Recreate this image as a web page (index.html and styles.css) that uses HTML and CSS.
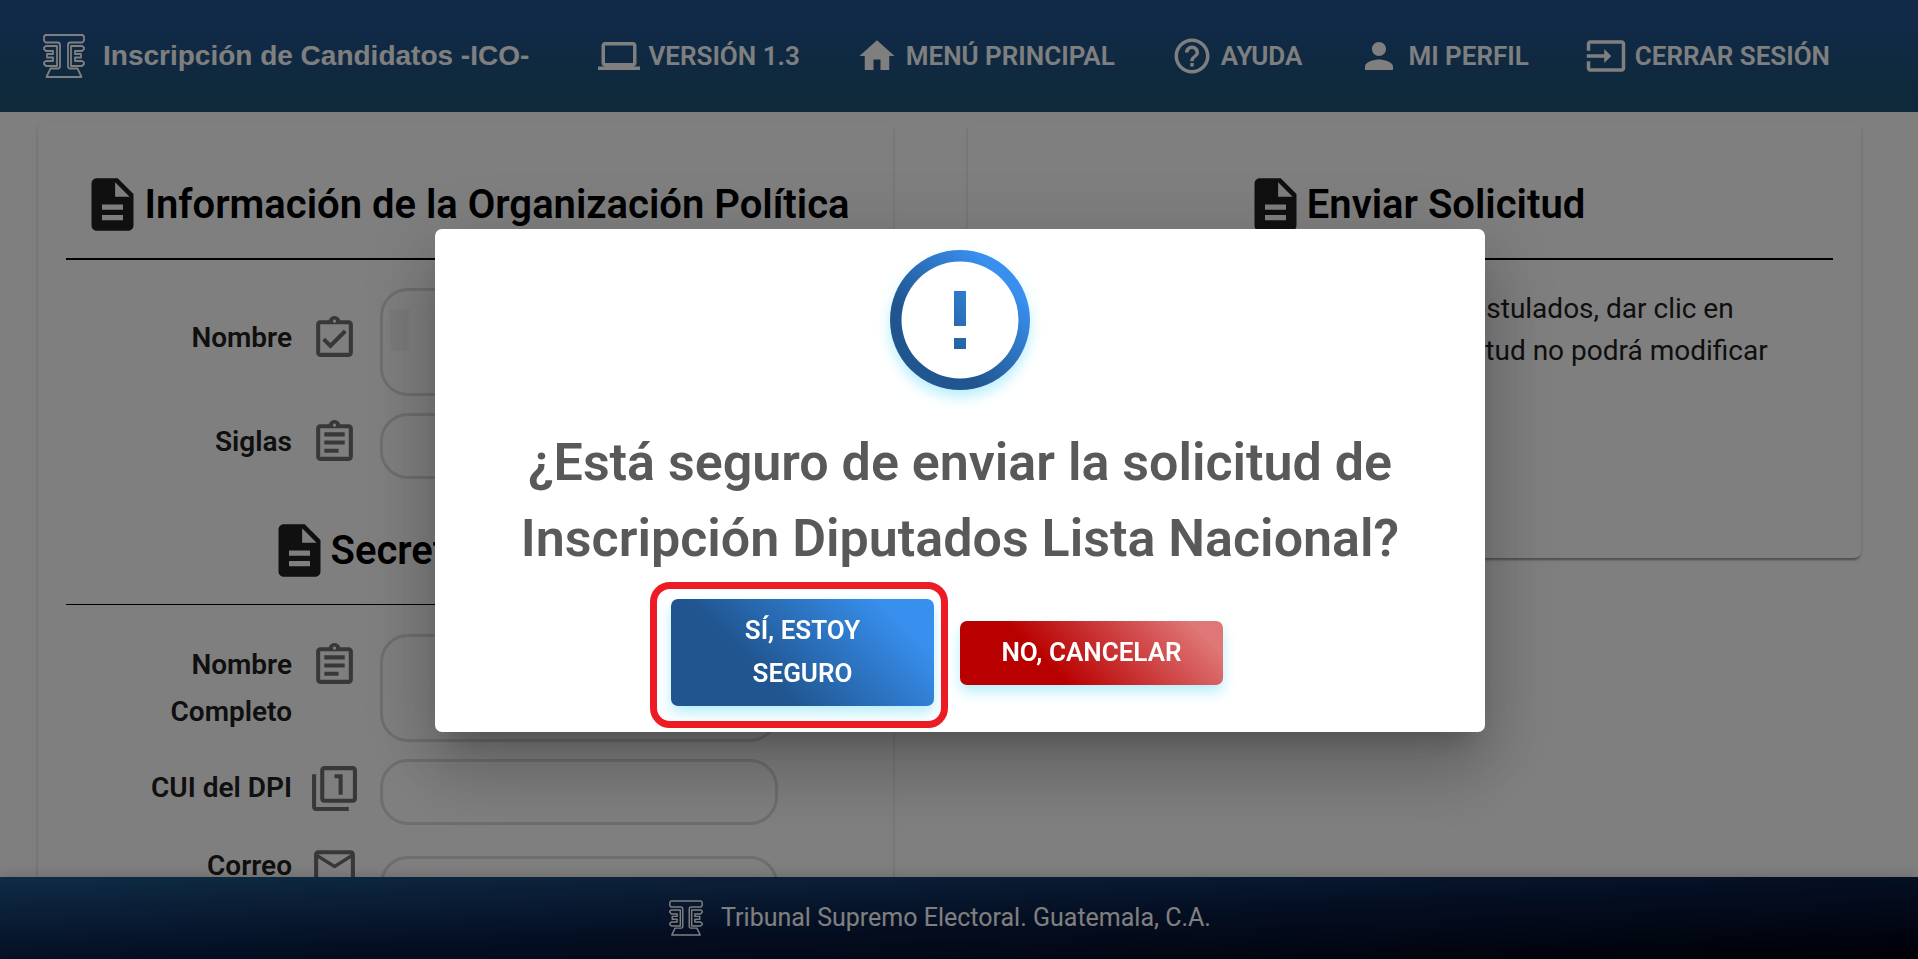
FILE: index.html
```html
<!DOCTYPE html>
<html lang="es">
<head>
<meta charset="utf-8">
<meta name="viewport" content="width=device-width, initial-scale=1">
<title>Inscripción de Candidatos -ICO-</title>
<link rel="stylesheet" href="styles.css">
</head>
<body>
<svg class="sprite" aria-hidden="true">
  <symbol id="logo" viewBox="0 0 42 44">
    <g fill="none" stroke="currentColor" stroke-width="1.800" stroke-linejoin="round">
      <path d="M2.500 1H39.500L41 2.500V6.500L39.500 8.500H27.500Q25 8.500 25 11V32Q25 34.500 27 34.500H34.500L38.500 43H3.500L7.500 34.500H15Q17 34.500 17 32V11Q17 8.500 14.500 8.500H2.500L1 6.500V2.500Z"/>
      <path d="M14 12H3L1 13.500V15L3 17H10V20H4V23.500H10V27H3L1 28.500V30L3 32H14Z"/>
      <path d="M28 12H39L41 13.500V15L39 17H32V20H38V23.500H32V27H39L41 28.500V30L39 32H28Z"/>
    </g>
  </symbol>
  <symbol id="laptop" viewBox="0 0 24 24"><path d="M20 18c1.100 0 2-.9 2-2V6c0-1.100-.9-2-2-2H4c-1.100 0-2 .9-2 2v10c0 1.100.9 2 2 2H0v2h24v-2h-4zM4 6h16v10H4V6z"/></symbol>
  <symbol id="home" viewBox="0 0 24 24"><path d="M10 20v-6h4v6h5v-8h3L12 3 2 12h3v8z"/></symbol>
  <symbol id="help" viewBox="0 0 24 24"><path d="M11 18h2v-2h-2v2zm1-16C6.480 2 2 6.480 2 12s4.480 10 10 10 10-4.480 10-10S17.520 2 12 2zm0 18c-4.410 0-8-3.590-8-8s3.590-8 8-8 8 3.590 8 8-3.590 8-8 8zm0-14c-2.210 0-4 1.790-4 4h2c0-1.100.9-2 2-2s2 .9 2 2c0 2-3 1.750-3 5h2c0-2.250 3-2.500 3-5 0-2.210-1.790-4-4-4z"/></symbol>
  <symbol id="person" viewBox="0 0 24 24"><path d="M12 12c2.210 0 4-1.790 4-4s-1.790-4-4-4-4 1.790-4 4 1.790 4 4 4zm0 2c-2.670 0-8 1.340-8 4v2h16v-2c0-2.660-5.330-4-8-4z"/></symbol>
  <symbol id="exit" viewBox="0 0 24 24"><path d="M21 3.010H3c-1.100 0-2 .9-2 2V9h2V4.990h18v14.030H3V15H1v4.010c0 1.100.9 1.980 2 1.980h18c1.100 0 2-.88 2-1.980v-14c0-1.110-.9-2-2-2zM11 16l4-4-4-4v3H1v2h10v3z"/></symbol>
  <symbol id="document" viewBox="0 0 24 24"><path d="M14 2H6c-1.100 0-1.990.9-1.990 2L4 20c0 1.100.89 2 1.990 2H18c1.100 0 2-.9 2-2V8l-6-6zm2 16H8v-2h8v2zm0-4H8v-2h8v2zm-3-5V3.500L18.500 9H13z"/></symbol>
  <symbol id="clip-check" viewBox="0 0 24 24"><path d="M19 3h-4.180C14.400 1.840 13.300 1 12 1s-2.400.84-2.820 2H5c-1.100 0-2 .9-2 2v14c0 1.100.9 2 2 2h14c1.100 0 2-.9 2-2V5c0-1.100-.9-2-2-2zm-7-.25c.41 0 .75.34.75.75s-.34.75-.75.75-.75-.34-.75-.75.34-.75.75-.75zM19 19H5V5h14v14zM17.990 9l-1.410-1.420-6.590 6.590-2.580-2.570-1.420 1.410 4 3.990z"/></symbol>
  <symbol id="clip-text" viewBox="0 0 24 24"><path d="M7 15h7v2H7zm0-4h10v2H7zm0-4h10v2H7zm12-4h-4.180C14.400 1.840 13.300 1 12 1s-2.400.84-2.820 2H5c-1.100 0-2 .9-2 2v14c0 1.100.9 2 2 2h14c1.100 0 2-.9 2-2V5c0-1.100-.9-2-2-2zm-7-.25c.41 0 .75.34.75.75s-.34.75-.75.75-.75-.34-.75-.75.34-.75.75-.75zM19 19H5V5h14v14z"/></symbol>
  <symbol id="filter-one" viewBox="0 0 24 24"><path d="M3 5H1v16c0 1.100.9 2 2 2h16v-2H3V5zm11 10h2V5h-4v2h2v8zm7-14H7c-1.100 0-2 .9-2 2v14c0 1.100.9 2 2 2h14c1.100 0 2-.9 2-2V3c0-1.100-.9-2-2-2zm0 16H7V3h14v14z"/></symbol>
  <symbol id="mail" viewBox="0 0 24 24"><path d="M22 6c0-1.100-.9-2-2-2H4c-1.100 0-2 .9-2 2v12c0 1.100.9 2 2 2h16c1.100 0 2-.9 2-2V6zm-2 0l-8 5-8-5h16zm0 12H4V8l8 5 8-5v10z"/></symbol>
</svg>

<header class="topbar">
  <div class="brand">
    <svg class="brand-logo"><use href="#logo"/></svg>
    <span>Inscripción de Candidatos -ICO-</span>
  </div>
  <nav class="menu">
    <a href="#"><svg class="icon"><use href="#laptop"/></svg>VERSIÓN 1.3</a>
    <a href="#"><svg class="icon"><use href="#home"/></svg>MENÚ PRINCIPAL</a>
    <a href="#"><svg class="icon"><use href="#help"/></svg>AYUDA</a>
    <a href="#"><svg class="icon"><use href="#person"/></svg>MI PERFIL</a>
    <a href="#"><svg class="icon"><use href="#exit"/></svg>CERRAR SESIÓN</a>
  </nav>
</header>

<main class="content">
  <section class="card card-info">
    <h2 class="heading"><svg class="icon-large"><use href="#document"/></svg>Información de la Organización Política</h2>
    <div class="row">
      <div class="caption"><label for="nombre">Nombre</label><svg class="icon-field"><use href="#clip-check"/></svg></div>
      <textarea class="field field-tall field-marked" id="nombre" readonly></textarea>
    </div>
    <div class="row">
      <div class="caption"><label for="siglas">Siglas</label><svg class="icon-field"><use href="#clip-text"/></svg></div>
      <input class="field" id="siglas" type="text" readonly>
    </div>
    <h2 class="heading heading-thin"><svg class="icon-large"><use href="#document"/></svg>Secretario General</h2>
    <div class="row">
      <div class="caption"><label for="completo">Nombre Completo</label><svg class="icon-field"><use href="#clip-text"/></svg></div>
      <textarea class="field field-tall" id="completo" readonly></textarea>
    </div>
    <div class="row">
      <div class="caption"><label for="cui">CUI del DPI</label><svg class="icon-field"><use href="#filter-one"/></svg></div>
      <input class="field" id="cui" type="text" readonly>
    </div>
    <div class="row">
      <div class="caption"><label for="correo">Correo Electrónico</label><svg class="icon-field"><use href="#mail"/></svg></div>
      <input class="field" id="correo" type="email" readonly>
    </div>
  </section>

  <section class="card card-send">
    <h2 class="heading"><svg class="icon-large"><use href="#document"/></svg>Enviar Solicitud</h2>
    <p class="note">Con todos los candidatos ya postulados, dar clic en<br>Enviar. Una vez enviada esta solicitud no podrá modificar<br>los datos.</p>
  </section>
</main>

<footer class="footer">
  <svg class="footer-logo"><use href="#logo"/></svg>
  <span>Tribunal Supremo Electoral. Guatemala, C.A.</span>
</footer>

<div class="backdrop">
  <div class="dialog" role="dialog" aria-modal="true" aria-labelledby="question">
    <div class="badge">
      <svg viewBox="0 0 140 140">
        <circle cx="70" cy="70" r="58.500" fill="#fff"/>
        <path fill="url(#mark)" d="M64 41h12v35H64zM64 88h12v11H64z"/>
        <defs><linearGradient id="mark" gradientUnits="userSpaceOnUse" x1="30" y1="110" x2="110" y2="30"><stop offset="0.100" stop-color="#20558f"/><stop offset="1" stop-color="#388fee"/></linearGradient></defs>
      </svg>
    </div>
    <h1 class="question" id="question">¿Está seguro de enviar la solicitud de Inscripción Diputados Lista Nacional?</h1>
    <div class="actions">
      <div class="highlight"><button class="button button-yes" type="button">SÍ, ESTOY SEGURO</button></div>
      <button class="button button-no" type="button">NO, CANCELAR</button>
    </div>
  </div>
</div>
</body>
</html>
```
FILE: styles.css
```css
* {
  box-sizing: border-box;
}

body {
  margin: 0;
  height: 100vh;
  display: flex;
  flex-direction: column;
  overflow: hidden;
  background: #fff;
  color: #202020;
  font-family: Roboto, "Liberation Sans", sans-serif;
}

svg {
  display: block;
  flex: none;
  fill: currentColor;
}

.sprite {
  position: absolute;
  width: 0;
  height: 0;
}

.topbar {
  flex: none;
  height: 112px;
  padding: 0 88px 0 43px;
  display: flex;
  align-items: center;
  justify-content: space-between;
  background: linear-gradient(#20548e 30%, #1f5274 90%);
  color: #fff;
}

.brand {
  display: flex;
  align-items: center;
  gap: 18px;
  font: bold 28px/40px "Liberation Sans", Arial, sans-serif;
}

.brand-logo {
  width: 42px;
  height: 44px;
}

.menu {
  display: flex;
  gap: 56px;
}

.menu a {
  display: flex;
  align-items: center;
  gap: 8px;
  color: inherit;
  font-size: 26px;
  font-weight: 600;
  line-height: 42px;
  text-decoration: none;
  white-space: nowrap;
}

.icon {
  width: 42px;
  height: 42px;
}

.content {
  flex: 1;
  min-height: 0;
  overflow: hidden;
  padding: 10px 57px 0 38px;
  display: flex;
  align-items: flex-start;
  gap: 75px;
}

.card {
  padding: 28px;
  border-radius: 7px;
  background: #fff;
  box-shadow: 0 4px 2px -2px rgba(0, 0, 0, 0.2), 0 2px 2px rgba(0, 0, 0, 0.14), 0 2px 5px rgba(0, 0, 0, 0.12);
}

.card-info {
  flex: 799;
}

.card-send {
  flex: 837;
  min-height: 436px;
}

.heading {
  margin: 0 0 28px;
  padding: 23px 0 22px;
  display: flex;
  align-items: center;
  justify-content: center;
  border-bottom: 2px solid #000;
  color: #000;
  font-size: 40px;
  font-weight: 600;
  line-height: 63px;
  white-space: nowrap;
}

.heading-thin {
  margin-bottom: 29px;
  border-bottom-width: 1px;
}

.icon-large {
  width: 63px;
  height: 63px;
  color: #202020;
}

.row {
  display: grid;
  grid-template-columns: 293fr 398fr;
  align-items: center;
  column-gap: 21px;
  margin-bottom: 17px;
  padding-right: 87px;
}

.caption {
  display: flex;
  align-items: flex-start;
  justify-content: flex-end;
  gap: 18px;
  padding-left: 66px;
}

.caption label {
  font-size: 28px;
  font-weight: 600;
  line-height: 47px;
  text-align: right;
}

.icon-field {
  width: 49px;
  height: 49px;
  margin-bottom: 8px;
  color: #707070;
}

.field {
  display: block;
  width: 100%;
  height: 66px;
  padding: 8px 24px;
  border: 3px solid #dcdcdc;
  border-radius: 28px;
  outline: none;
  resize: none;
  background: none;
  color: inherit;
  font: 28px/42px Roboto, sans-serif;
}

.field-tall {
  height: 108px;
}

.field-marked {
  background: linear-gradient(#f4f4f4, #f4f4f4) 7px 18px / 19px 42px no-repeat;
}

.note {
  margin: 0;
  font-size: 28px;
  line-height: 42px;
  text-align: center;
  white-space: nowrap;
}

.footer {
  flex: none;
  height: 82px;
  padding-right: 38px;
  display: flex;
  align-items: center;
  justify-content: center;
  gap: 18px;
  background: linear-gradient(to bottom right, #1e588c, #0a1f48 50%, #00000c);
  box-shadow: 0 0 14px rgba(0, 0, 0, 0.2);
  color: #fff;
  font-size: 25px;
  line-height: 42px;
  z-index: 1;
}

.footer-logo {
  width: 34px;
  height: 36px;
}

.backdrop {
  position: fixed;
  inset: 0;
  z-index: 2;
  display: flex;
  align-items: center;
  justify-content: center;
  padding: 2px 0 0 2px;
  background: rgba(0, 0, 0, 0.5);
}

.dialog {
  width: 1050px;
  max-width: 96%;
  padding: 21px 42px 26px;
  display: flex;
  flex-direction: column;
  align-items: center;
  border-radius: 7px;
  background: #fff;
  box-shadow: 0 19px 26px -12px rgba(0, 0, 0, 0.2), 0 42px 66px 5px rgba(0, 0, 0, 0.14), 0 16px 80px 14px rgba(0, 0, 0, 0.12);
}

.badge {
  width: 140px;
  height: 140px;
  border-radius: 50%;
  background: linear-gradient(45deg, #20558f 33%, #388fee 80%);
  box-shadow: 0 7px 14px #b8eefb;
}

.question {
  max-width: 940px;
  margin: 35px 0 22px;
  color: #595959;
  font-size: 52px;
  font-weight: 600;
  line-height: 76px;
  text-align: center;
}

.actions {
  display: flex;
  align-items: center;
  gap: 26px;
  padding-right: 26px;
}

.highlight {
  position: relative;
}

.highlight::after {
  content: "";
  position: absolute;
  inset: -17px -14px -22px -21px;
  border: 7px solid #ed1c24;
  border-radius: 20px;
  pointer-events: none;
}

.button {
  display: block;
  width: 263px;
  padding: 10px 28px 11px;
  border: 0;
  border-radius: 7px;
  box-shadow: 0 7px 14px #b8eefb;
  color: #fff;
  font: 600 26px/43px Roboto, sans-serif;
}

.button-yes {
  background: linear-gradient(45deg, #20558f 33%, #388fee 85%);
}

.button-no {
  background: linear-gradient(45deg, #b80000 33%, #e07777 90%);
}
```
